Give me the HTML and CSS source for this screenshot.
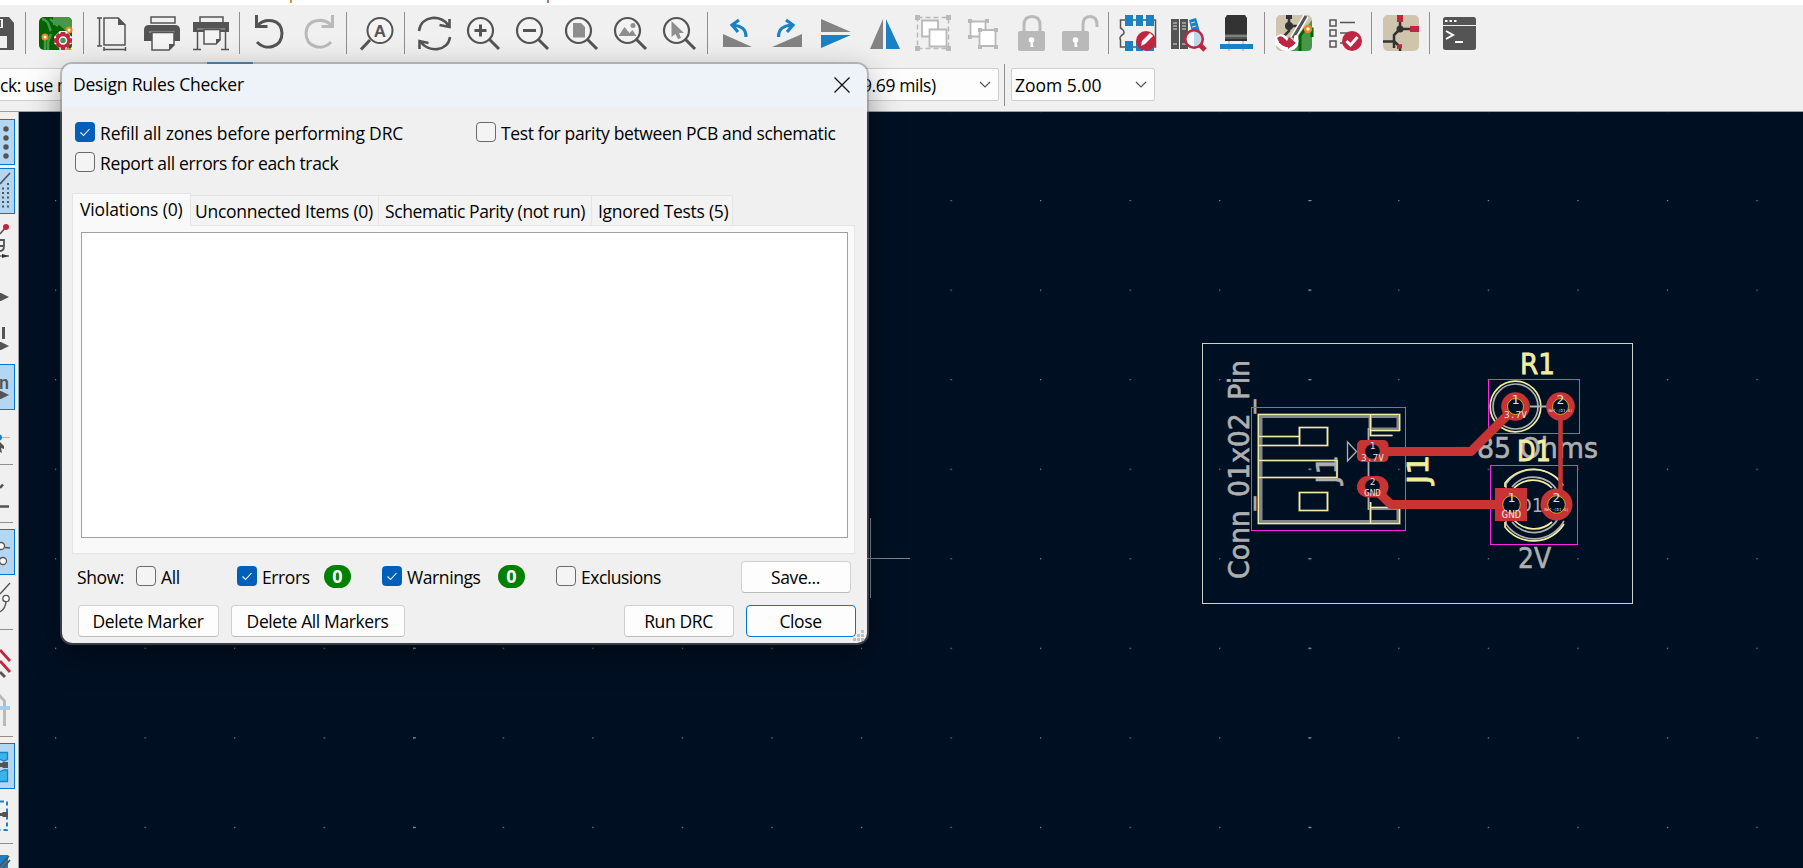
FILE: index.html
```html
<!DOCTYPE html>
<html lang="en">
<head>
<meta charset="utf-8">
<title>PCB Editor</title>
<link rel="stylesheet" href="styles.css">
</head>
<body>
<div class="app">
  <div class="menu-strip"><i class="tick tick-a"></i><i class="tick tick-b"></i></div>
  <header class="toolbars">
    <div class="main-toolbar">
      <svg class="tool" viewBox="0 10 49 48"><path d="M10 17h27l5 6v27H10z" fill="#545454"/><path d="M20 19h11v9H20z" fill="#f0f0f0"/><path d="M27 20h2v7h-2z" fill="#545454"/><path d="M16 36h19v12H16z" fill="#f0f0f0"/></svg>
      <i class="sep"></i>
      <svg class="tool" viewBox="0 10 49 48"><rect x="9" y="17" width="33" height="33" rx="5" fill="#006400"/><path d="M23 17h14q5 0 5 5v9h-6l-7-6h-6z" fill="#489648"/><path d="M12 19c8 2 6 7 9 12M15 40v10M21 34l-3 8v8M20 19l8 7" fill="none" stroke="#489648" stroke-width="2.5"/><circle cx="15" cy="37" r="2.5" fill="#fff" stroke="#e58a1a" stroke-width="2"/><circle cx="39" cy="30" r="2.5" fill="#fff" stroke="#e58a1a" stroke-width="2"/><path d="M38 47l4 3h-6z" fill="#f29100"/><g stroke="#fff" stroke-width="7"><path d="M33 31v19M24 40h18M27 34l12 12M39 34L27 46"/></g><g stroke="#bf2641" stroke-width="4.5"><path d="M33 32v18M24 40.500h18M27 34.500l12 12M39 34.500l-12 12"/></g><circle cx="33" cy="40.500" r="5" fill="#489648" stroke="#bf2641" stroke-width="5"/><circle cx="33" cy="40.500" r="3.500" fill="#489648" stroke="#fff" stroke-width="1.500"/></svg>
      <i class="sep"></i>
      <svg class="tool" viewBox="0 10 49 48"><g fill="none" stroke="#545454" stroke-width="1.500"><path d="M11.500 18v28M9 18h5M9 46h5M16 49.500h22M16 47v4M37.500 47v4"/><path d="M16 18h14l7 7v20H16z"/></g><path d="M30 17l8 8h-8z" fill="#545454"/></svg>
      <svg class="tool" viewBox="0 10 49 48"><path d="M14 17h24v6H14z" fill="#f0f0f0" stroke="#545454" stroke-width="1.500"/><path d="M12 25h26q5 0 5 5v11h-5v-9H12v9H7V30q0-5 5-5z" fill="#545454"/><path d="M12 32h26v9H12z" fill="#545454"/><path d="M12 32h26" stroke="#bbb"/><path d="M15 32.500h22V45l-5 5H15z" fill="#f4f4f4" stroke="#545454" stroke-width="1.500"/><path d="M32 44h6l-6 6z" fill="#545454"/></svg>
      <svg class="tool" viewBox="0 10 49 48"><path d="M14 17h23v6H14z" fill="#f0f0f0" stroke="#545454" stroke-width="1.500"/><path d="M7 22h36v10H7z" fill="#545454"/><path d="M11 29h28" stroke="#aaa"/><path d="M11.500 32v17M7 49.500h8M39.500 32v17M35 49.500h8" stroke="#545454" stroke-width="1.500"/><path d="M18 29.500h16V40l-4 4H18z" fill="#f4f4f4" stroke="#545454" stroke-width="1.500"/><path d="M30 39h5l-5 5z" fill="#545454"/></svg>
      <i class="sep"></i>
      <svg class="tool" viewBox="0 10 49 48"><g fill="none" stroke="#545454" stroke-width="3"><path d="M14 25C21 18 37 18 38 33c0 15-17 18-25 9"/><path d="M12.500 15v11.500h11"/></g></svg>
      <svg class="tool" viewBox="0 10 49 48"><g fill="none" stroke="#b9b9b9" stroke-width="3"><path d="M38 25C31 18 14 18 13 33c0 15 17 18 25 9"/><path d="M39.500 15v11.500h-11"/></g></svg>
      <i class="sep"></i>
      <svg class="tool" viewBox="0 10 49 48"><circle cx="29" cy="30.500" r="12.500" fill="#f3f3f3" stroke="#545454" stroke-width="2"/><path d="M19 40L10 49.500" stroke="#545454" stroke-width="3"/><text x="29" y="37" text-anchor="middle" class="find-letter">A</text></svg>
      <i class="sep"></i>
      <svg class="tool" viewBox="0 10 49 48"><g fill="none" stroke="#545454" stroke-width="2.600"><path d="M10 31c2-16 23-17 30-5M40.500 19v8l-10-2M41 37c-2 15-22 16-30 4M10.500 49v-8l9 2"/></g></svg>
      <svg class="tool" viewBox="0 10 49 48"><circle cx="22.500" cy="30.500" r="12.500" class="lens"/><path d="M31 39l10 10" class="handle"/><path d="M16.500 30.500h12M22.500 24.500v12" stroke="#545454" stroke-width="3"/></svg>
      <svg class="tool" viewBox="0 10 49 48"><circle cx="22.500" cy="30.500" r="12.500" class="lens"/><path d="M31 39l10 10" class="handle"/><path d="M16 30.500h13" stroke="#545454" stroke-width="3"/></svg>
      <svg class="tool" viewBox="0 10 49 48"><circle cx="22.500" cy="30.500" r="12.500" class="lens"/><path d="M31 39l10 10" class="handle"/><path d="M17 23h8l4 4v10.500H17z" fill="#8e8e8e"/></svg>
      <svg class="tool" viewBox="0 10 49 48"><circle cx="22.500" cy="30.500" r="12.500" class="lens"/><path d="M31 39l10 10" class="handle"/><path d="M13.500 36l6-9 5 6 3-3 4 6z" fill="#8e8e8e"/><circle cx="28" cy="25.500" r="2.500" fill="#8e8e8e"/></svg>
      <svg class="tool" viewBox="0 10 49 48"><circle cx="22.500" cy="30.500" r="12.500" class="lens"/><path d="M31 39l10 10" class="handle"/><path d="M17.500 21v16l4-3 2.500 5 3-1-2-5h5z" fill="#8e8e8e"/></svg>
      <i class="sep"></i>
      <svg class="tool" viewBox="0 10 49 48"><path d="M11 34v13h29z" fill="#838383"/><path d="M34 37c0-8-4-11-14-12M27 20l-7 5 6 7" fill="none" stroke="#1a81c4" stroke-width="3.200"/></svg>
      <svg class="tool" viewBox="0 10 49 48"><path d="M41 34v13H11z" fill="#838383"/><path d="M17.500 37c0-8 4-11 14-12M25 20l7 5-6 7" fill="none" stroke="#1a81c4" stroke-width="3.200"/></svg>
      <svg class="tool" viewBox="0 10 49 48"><path d="M11 19v13h30z" fill="#838383"/><path d="M11 35h30L11 48z" fill="#1a81c4"/></svg>
      <svg class="tool" viewBox="0 10 49 48"><path d="M24 19v30H11z" fill="#838383"/><path d="M27 19v30h14z" fill="#1a81c4"/></svg>
      <svg class="tool" viewBox="0 10 49 48"><path d="M9.500 17.500h31v31h-31z" fill="none" stroke="#b9b9b9" stroke-width="1.500" stroke-dasharray="5 3"/><path d="M7 15h5v5H7zM38 15h5v5h-5zM7 46h5v5H7zM38 46h5v5h-5z" fill="#b9b9b9"/><path d="M14 20.500h16v16H14z" fill="#fff" stroke="#b9b9b9" stroke-width="1.800"/><path d="M21.500 29.500h17v17h-17z" fill="#fff" stroke="#b9b9b9" stroke-width="1.800"/></svg>
      <svg class="tool" viewBox="0 10 49 48"><path d="M13.500 21.500h15v15h-15z" fill="#fff" stroke="#b9b9b9" stroke-width="1.800"/><path d="M22.500 30h16v16h-16z" fill="#fff" stroke="#b9b9b9" stroke-width="1.800"/><path d="M11 19h4v4h-4zM28 19h4v4h-4zM11 35h4v4h-4zM21 28h4v4h-4zM37 28h4v4h-4zM21 45h4v4h-4zM37 45h4v4h-4z" fill="#b9b9b9"/></svg>
      <svg class="tool" viewBox="0 10 49 48"><path d="M18 32v-7q0-8.500 8-8.500t8 8.500v7" fill="none" stroke="#b9b9b9" stroke-width="3"/><rect x="12" y="31" width="27" height="20" rx="2" fill="#b9b9b9"/><circle cx="25.500" cy="40" r="2.800" fill="#fff"/><path d="M24.500 41h2l1 6h-3z" fill="#fff"/></svg>
      <svg class="tool" viewBox="0 10 49 48"><path d="M28 32v-7q0-8.500 7-8.500t7 8.500v2" fill="none" stroke="#b9b9b9" stroke-width="3"/><rect x="7" y="31" width="27" height="20" rx="2" fill="#b9b9b9"/><circle cx="20.500" cy="40" r="2.800" fill="#fff"/><path d="M19.500 41h2l1 6h-3z" fill="#fff"/></svg>
      <i class="sep"></i>
      <svg class="tool" viewBox="0 10 49 48"><path d="M13 20H7.500v8q5 3 3 6-5 3-3 6v7H42.500V20z" fill="none" stroke="#545454" stroke-width="1.500"/><path d="M12 15h8v11h-8zM23 15h7v11h-7zM33 15h8v11h-8zM12 41h8v10h-8zM23 41h7v10h-7zM33 41h8v10h-8z" fill="#1a81c4"/><circle cx="33" cy="41" r="10" fill="#bf2641"/><path d="M28 46l1-5 8-8 3 3-8 8z" fill="#fff"/></svg>
      <svg class="tool" viewBox="0 10 49 48"><path d="M9 19h8v30H9zM18 19h8v30h-8z" fill="#545454"/><path d="M11 23h4M11 26h4M11 29h4M11 44h4M20 23h4M20 26h4M20 29h4M20 44h4" stroke="#ddd"/><path d="M27 20l7-2 7 24-8 2z" fill="#1a81c4"/><path d="M29 23l4-1M30 27l4-1" stroke="#ddd"/><path d="M36 43l7 7" stroke="#bf2641" stroke-width="5"/><circle cx="32" cy="39" r="8.800" fill="#bed8ea" stroke="#bf2641" stroke-width="2.500"/><path d="M32 32v14a7 7 0 010-14z" fill="#fff"/></svg>
      <svg class="tool" viewBox="0 10 49 48"><path d="M18 41v10M32 41v10" stroke="#b9b9b9" stroke-width="1.500"/><path d="M16 15h18l2 3v16H14V18z" fill="#333"/><path d="M14 34h22v7H14z" fill="#545454"/><path d="M14 36h22" stroke="#aaa"/><path d="M14 39h22v2H14z" fill="#333"/><path d="M9 44h33v5H9z" fill="#1a81c4"/></svg>
      <i class="sep"></i>
      <svg class="tool" viewBox="0 10 49 48"><rect x="7" y="15" width="36" height="36" rx="5" fill="#cfc4ac"/><path d="M43 20v26q0 5-5 5H20z" fill="#489648"/><path d="M31 51V36l5-7h7v8" fill="none" stroke="#006400" stroke-width="3"/><circle cx="39" cy="29" r="3" fill="#fff" stroke="#e58a1a" stroke-width="2.500"/><path d="M20 15v16l-6 6v4M20 26h8" fill="none" stroke="#333" stroke-width="2.500"/><path d="M17 15h6v4h-6z" fill="#333"/><circle cx="20" cy="26" r="4" fill="#333"/><path d="M37 16L24 38" stroke="#fff" stroke-width="6"/><path d="M37 16L24 38" stroke="#545454" stroke-width="3"/><path d="M8 38q5-4 10 2l-3 2h12v-5q2 8-3 11-9 4-16-5z" fill="#bf2641" stroke="#fff" stroke-width="4" stroke-linejoin="round"/><path d="M8 38q4-4 8 1l2 2 2-4 7 6-8 6v-3q-8 0-11-8z" fill="#bf2641"/></svg>
      <svg class="tool" viewBox="0 10 49 48"><g fill="none" stroke="#545454" stroke-width="1.500"><path d="M12 20h6v6h-6zM12 30h6v6h-6zM12 41h6v6h-6zM22 22.500h15M22 33h10M22 43h5"/></g><circle cx="34" cy="41" r="10" fill="#bf2641"/><path d="M28.500 41l4 4 7-8" fill="none" stroke="#fff" stroke-width="3"/></svg>
      <i class="sep"></i>
      <svg class="tool" viewBox="0 10 49 48"><rect x="7" y="15" width="36" height="36" rx="5" fill="#cfc4ac"/><path d="M24 20v9h11M24 29l-6 6v13M7 41.500h11M18 41l6 6v4" fill="none" stroke="#333" stroke-width="2.500"/><circle cx="24" cy="29" r="3.500" fill="#333"/><path d="M21 15h6v7h-6zM34 26h9v6h-9z" fill="#bf2641"/><path d="M21 45l5-1v4l-5 1z" fill="#bf2641"/></svg>
      <i class="sep"></i>
      <svg class="tool" viewBox="0 10 49 48"><rect x="9" y="17" width="33" height="33" rx="2.500" fill="#545454"/><path d="M9 25.500h33" stroke="#f0f0f0" stroke-width="1.200"/><path d="M11 20h2.500v2H11zM15.500 20H18v2h-2.500zM20 20h2.500v2H20z" fill="#fff"/><path d="M12 31l7 4-7 4M21 42h8" fill="none" stroke="#fff" stroke-width="2"/></svg>
    </div>
    <div class="options-toolbar">
      <div class="combo combo-track"><span class="t-track">ck: use n</span></div>
      <i class="hot-edge"></i>
      <div class="combo combo-via"><span class="t-via">9.69 mils)</span><svg class="chev" viewBox="0 0 12 8"><path d="M1 1l5 5 5-5"/></svg></div>
      <i class="vbar"></i>
      <div class="combo combo-zoom"><span class="t-zoom">Zoom 5.00</span><svg class="chev" viewBox="0 0 12 8"><path d="M1 1l5 5 5-5"/></svg></div>
    </div>
  </header>
  <div class="workspace">
    <aside class="side-toolbar">
      <svg class="side on" viewBox="0 0 18 49"><g fill="#545454"><circle cx="6" cy="12" r="2.700"/><circle cx="6" cy="21" r="2.700"/><circle cx="6" cy="30" r="2.700"/><circle cx="6" cy="39" r="2.700"/></g></svg>
      <svg class="side on" viewBox="0 0 18 49"><path d="M0 18L10 7" stroke="#545454" stroke-width="1.600"/><path d="M8 17v25M3 21.500v21" stroke="#545454" stroke-width="2" stroke-dasharray="2 2.500"/></svg>
      <svg class="side" viewBox="0 0 18 49"><path d="M0 19l6-7" stroke="#545454" stroke-width="1.500"/><circle cx="6" cy="12" r="3" fill="#bf2641"/><path d="M0 25h4v6q0 5-4 5M4 31H0" fill="none" stroke="#545454" stroke-width="1.800"/><path d="M0 41h9" stroke="#333"/><path d="M2 39l7 2-7 2z" fill="#333"/></svg>
      <svg class="side" viewBox="0 0 18 49"><path d="M0 29h1l8 4-8 4H0z" fill="#545454"/></svg>
      <svg class="side" viewBox="0 0 18 49"><path d="M2 14h3v12H2zM0 29h1l8 4-8 4H0z" fill="#545454"/></svg>
      <svg class="side on" viewBox="0 0 18 49"><text x="-1" y="27" class="unit" textLength="10" lengthAdjust="spacingAndGlyphs">n</text><path d="M0 29h1l8 4-8 4H0z" fill="#545454"/></svg>
      <svg class="side" viewBox="0 0 18 49"><path d="M0 26.500h10" stroke="#b9b9b9" stroke-width="1.200"/><circle cx="-1" cy="26.500" r="3" fill="#1a81c4"/><path d="M0 31l4 4v3l-3-1 1 5-2-1z" fill="#545454"/></svg>
      <i class="hsep"></i>
      <svg class="side" viewBox="0 0 18 49"><path d="M0 19l3-3.500M0 37.500h9" stroke="#545454" stroke-width="2.600"/></svg>
      <i class="hsep"></i>
      <svg class="side on" viewBox="0 0 18 49"><path d="M0 20l10 1M0 31l3 3" stroke="#545454" stroke-width="1.600"/><circle cx="1" cy="19" r="3.500" fill="#fff" stroke="#545454" stroke-width="1.300"/><circle cx="3" cy="34" r="3.500" fill="#fff" stroke="#545454" stroke-width="1.300"/></svg>
      <svg class="side" viewBox="0 0 18 49"><path d="M0 18L10 7M6 25q0 7-6 11" fill="none" stroke="#545454" stroke-width="1.400"/><circle cx="6" cy="22.500" r="3.200" fill="#fff" stroke="#545454" stroke-width="1.300"/></svg>
      <i class="hsep"></i>
      <svg class="side" viewBox="0 0 18 49"><path d="M0 16l10 11M0 27l10 11" stroke="#bf2641" stroke-width="2.800"/><path d="M0 38l5 5" stroke="#545454" stroke-width="2.800"/></svg>
      <svg class="side" viewBox="0 0 18 49"><path d="M-1 12l5.500 6v25" fill="none" stroke="#b9b9b9" stroke-width="3"/><path d="M0 23h10v4H0z" fill="#a3cde8"/></svg>
      <i class="hsep"></i>
      <svg class="side on" viewBox="0 0 18 49"><path d="M-1 11.500h8.500v7L4 20l-5-2zM-1 31l5-2h3.500v11.500H-1z" fill="#39b4ea" stroke="#1a81c4" stroke-width="1.300"/><path d="M0 22h2l1-1h5v6H3l-1-1H0z" fill="#545454"/></svg>
      <svg class="side" viewBox="0 0 18 49"><path d="M0 11.500h7V40H0" fill="none" stroke="#1a81c4" stroke-width="2" stroke-dasharray="4 3"/><path d="M0 23h2l1-1h5v5H3l-1-1H0z" fill="#545454"/></svg>
      <i class="hsep"></i>
      <svg class="side last" viewBox="0 0 18 20"><path d="M0 7h8v13H0z" fill="#1a81c4"/><path d="M-2 20L9 8M3 20l7-8" stroke="#545454" stroke-width="1.800"/></svg>
    </aside>
    <main class="canvas">
      <svg class="board" viewBox="19 112 1784 756">
        <defs>
          <pattern id="grid" x="55" y="200" width="89.550" height="89.550" patternUnits="userSpaceOnUse"><rect width="1.200" height="1.200" fill="#8a9096"/></pattern>
          <pattern id="major" x="413" y="200" width="895.500" height="89.550" patternUnits="userSpaceOnUse"><rect width="3" height="1.100" fill="#8a9096"/></pattern>
        </defs>
        <rect x="19" y="112" width="1784" height="756" fill="url(#grid)"/>
        <rect x="19" y="112" width="1784" height="756" fill="url(#major)"/>
        <path d="M870.500 518v80M830 558.500h80" stroke="#7f868c"/>
        <rect x="1202.500" y="343.500" width="430" height="260" fill="none" stroke="#d0d2cd"/>

        <g fill="none" stroke="#868890" stroke-width="3"><path d="M1398 416.500h-137v105h137v-13M1398 416v13h-28v-13M1370 508.500h28"/></g>
        <g fill="none" stroke="#afafaf" stroke-width="1.800"><path d="M1368.500 428v82"/><path d="M1347.500 442v19l9-9.500z" stroke-width="1.300"/></g>
        <text class="fab" transform="translate(1337 484) rotate(-90)" textLength="29" lengthAdjust="spacingAndGlyphs">J1</text>
        <text class="fab" transform="translate(1249 579) rotate(-90)" textLength="219" lengthAdjust="spacingAndGlyphs">Conn_01x02_Pin</text>
        <g fill="none" stroke="#a09e78" stroke-width="2.200"><path id="j1silk" d="M1399.500 431v-16.500h-141v109h141V508M1370.500 414v21.500h22M1370 430.500h30M1370.500 502v21M1370 507.500h29M1259 436.500h40M1259 445.500h41M1259 460.500h78v17h-78M1299.500 427.500h28v18h-28zM1299.500 492.500h28v18h-28z"/></g>
        <use href="#j1silk" fill="none" stroke="#f2eda1" stroke-width="1.200"/>
        <rect x="1251.500" y="407.500" width="154" height="123" class="court"/>

        <circle cx="1515.500" cy="406.500" r="22.500" fill="none" stroke="#afafaf" stroke-width="1.700"/>
        <circle cx="1515.500" cy="406.500" r="25.300" fill="none" stroke="#f2eda1" stroke-width="1.700"/>
        <path d="M1530 406.500h20" stroke="#afafaf" stroke-width="2"/>
        <rect x="1488.500" y="379.500" width="91" height="54" class="court"/>
        <text class="silk" x="1520" y="374" textLength="35" lengthAdjust="spacingAndGlyphs">R1</text>
        <text class="fab" x="1477" y="458" textLength="121" lengthAdjust="spacingAndGlyphs">85 Ohms</text>
        <text class="silk" x="1517" y="461" textLength="34" lengthAdjust="spacingAndGlyphs">D1</text>
        <text class="silk" transform="translate(1428 484) rotate(-90)" textLength="29" lengthAdjust="spacingAndGlyphs">J1</text>

        <g fill="none" stroke="#afafaf" stroke-width="1.700"><path d="M1506 484a34 34 0 0157 2M1506 524a34 34 0 0058-3M1506 484v40M1512 487a28 28 0 0146 5M1512 522a28 28 0 0047-5"/></g>
        <g fill="none" stroke="#f2eda1" stroke-width="1.700"><path d="M1505 487v-4a36 36 0 0158 2M1505 522v5a36 36 0 0059-3M1514 488a27 27 0 0138 0M1514 520a27 27 0 0038 2"/></g>
        <text class="fab small" x="1518" y="512" textLength="25" lengthAdjust="spacingAndGlyphs">D1</text>
        <text class="fab" x="1518" y="568" textLength="33" lengthAdjust="spacingAndGlyphs">2V</text>
        <rect x="1490.500" y="465.500" width="87" height="79" class="court"/>

        <g fill="none" stroke="#c83434" stroke-linejoin="round"><path d="M1380 451.500h91l44-44M1372.500 486.500l18.500 18h120" stroke-width="9"/><path d="M1560.500 406v98" stroke-width="4.500"/></g>
        <g fill="#c83434"><rect x="1357" y="440" width="31.500" height="22" rx="5"/><rect x="1357" y="476" width="31.500" height="21.500" rx="10.700"/><circle cx="1515.500" cy="406.500" r="14.300"/><circle cx="1560.500" cy="406.500" r="14.300"/><path d="M1495 488h32v33h-32z"/><circle cx="1556.500" cy="504.500" r="16"/></g>
        <g fill="#001023"><circle cx="1372.500" cy="451.500" r="7.300"/><circle cx="1372.500" cy="486.500" r="7.300"/><g stroke="#d9a520"><circle cx="1515.500" cy="406.500" r="8"/><circle cx="1560.500" cy="406.500" r="8"/><circle cx="1511.500" cy="504.500" r="8.800"/><circle cx="1556.500" cy="504.500" r="8.800"/></g></g>
        <g class="padtext">
          <text x="1372.500" y="449">1</text><text x="1372.500" y="461">3.7V</text>
          <text x="1372.500" y="485">2</text><text x="1372.500" y="496">GND</text>
          <g class="num"><text x="1515.500" y="404">1</text><text x="1560.500" y="404">2</text><text x="1511.500" y="502">1</text><text x="1556.500" y="502">2</text></g>
          <text x="1515.500" y="418">3.7V</text><text x="1511.500" y="518" class="gnd">GND</text>
          <text x="1560.500" y="412" class="tiny">Net-(D1-A)</text><text x="1556.500" y="511" class="tiny">Net-(D1-A)</text>
        </g>
      </svg>
    </main>
  </div>
</div>

<section class="dialog">
  <div class="titlebar"><span class="t-title">Design Rules Checker</span><svg class="close-x" viewBox="0 0 16 16"><path d="M.5.500l15 15M15.500.500l-15 15"/></svg></div>
  <div class="options">
    <label><i class="cb checked"><svg viewBox="0 0 20 20"><path d="M5.500 10.500l3 3 6-6.500"/></svg></i><span class="t-refill">Refill all zones before performing DRC</span></label>
    <label><i class="cb"></i><span class="t-test">Test for parity between PCB and schematic</span></label>
    <label><i class="cb"></i><span class="t-report">Report all errors for each track</span></label>
  </div>
  <div class="tabs">
    <div class="tab tab-1"><span class="t-viol">Violations (0)</span></div>
    <div class="tab tab-2"><span class="t-unc">Unconnected Items (0)</span></div>
    <div class="tab tab-3"><span class="t-sch">Schematic Parity (not run)</span></div>
    <div class="tab tab-4"><span class="t-ign">Ignored Tests (5)</span></div>
  </div>
  <div class="panel"><div class="list"></div></div>
  <div class="show-row">
    <span class="t-show">Show:</span>
    <label><i class="cb"></i><span class="t-all">All</span></label>
    <label><i class="cb checked"><svg viewBox="0 0 20 20"><path d="M5.500 10.500l3 3 6-6.500"/></svg></i><span class="t-err">Errors</span></label>
    <b class="badge">0</b>
    <label><i class="cb checked"><svg viewBox="0 0 20 20"><path d="M5.500 10.500l3 3 6-6.500"/></svg></i><span class="t-warn">Warnings</span></label>
    <b class="badge">0</b>
    <label><i class="cb"></i><span class="t-excl">Exclusions</span></label>
    <div class="btn">Save...</div>
  </div>
  <div class="button-row">
    <div class="btn b-del">Delete Marker</div>
    <div class="btn b-all">Delete All Markers</div>
    <div class="btn b-run">Run DRC</div>
    <div class="btn b-close">Close</div>
  </div>
  <svg class="grip" viewBox="0 0 11 11"><path d="M8 0h3v3H8zM4 4h3v3H4zM8 4h3v3H8zM0 8h3v3H0zM4 8h3v3H4zM8 8h3v3H8z" fill="#bfbfbf"/></svg>
</section>
</body>
</html>
```
FILE: styles.css
```css
* { box-sizing: border-box; }
html, body { margin: 0; height: 100%; overflow: hidden; }
body {
  font-family: "Open Sans", "Noto Sans", sans-serif;
  font-size: 17.5px;
  letter-spacing: -0.4px;
  color: #000;
  background: #f0f0f0;
}
svg { display: block; }
span, .btn { white-space: nowrap; }
.app { display: flex; flex-direction: column; width: 1803px; height: 868px; overflow: hidden; }

.menu-strip { height: 5px; flex: none; background: #fff; display: flex; }
.tick { width: 2px; height: 3px; background: #c99a4a; }
.tick-a { margin-left: 290px; }
.tick-b { margin-left: 255px; background: #a8728c; }

.toolbars { flex: none; height: 107px; background: #f0f0f0; border-bottom: 1px solid #a0a0a0; display: flex; flex-direction: column; }
.main-toolbar { display: flex; height: 57px; padding-top: 5px; margin-left: -28px; }
.tool { width: 49px; height: 48px; flex: none; }
.sep { width: 9px; flex: none; height: 42px; margin-top: 2px; background: linear-gradient(#8f8f8f, #8f8f8f) 4px 0 / 1px 100% no-repeat; }
.lens { fill: #f3f3f3; stroke: #545454; stroke-width: 2.2; }
.handle { stroke: #545454; stroke-width: 3; }
.find-letter { font: bold 17px "Liberation Sans", sans-serif; fill: #545454; letter-spacing: 0; }

.options-toolbar { display: flex; height: 49px; padding-top: 6px; }
.combo { height: 33px; background: #fdfdfd; border: 1px solid #cfcfcf; border-radius: 2px; display: flex; align-items: center; justify-content: space-between; flex: none; }
.combo-track { width: 190px; border-left: 0; border-radius: 0; }
.hot-edge { width: 46px; height: 2px; margin: -6px 0 0 17px; background: #2d7fc0; flex: none; }
.combo-via { width: 159px; margin-left: 587px; padding: 0 7px 0 21px; }
.vbar { width: 1px; height: 42px; margin: -4px 6px 0 5px; background: #8f8f8f; }
.combo-zoom { width: 144px; padding: 0 7px 0 3px; }
.t-zoom { letter-spacing: 0; }
.chev { width: 12px; height: 8px; fill: none; stroke: #555; stroke-width: 1.2; }

.workspace { flex: 1; display: flex; min-height: 0; }
.side-toolbar { width: 19px; flex: none; padding-top: 5px; background: #f0f0f0; border-right: 1px solid #a0a0a0; overflow: hidden; }
.side { width: 18px; height: 49px; }
.side.last { height: 20px; }
.side.on { background: linear-gradient(#b3d6f2, #b3d6f2) 0 3px / 14px 44px no-repeat, linear-gradient(#0078d7, #0078d7) 0 2px / 15px 46px no-repeat; }
.hsep { display: block; width: 13px; height: 9px; background: linear-gradient(#8f8f8f, #8f8f8f) 0 4px / 100% 1px no-repeat; }
.unit { font: bold 19px "Liberation Sans", sans-serif; fill: #545454; letter-spacing: 0; }

.canvas { flex: 1; background: #001023; }
.board { width: 1784px; height: 756px; }
.court { fill: none; stroke: #ff26e2; stroke-width: 1; }
.board text { font-family: "DejaVu Sans", sans-serif; font-size: 27.5px; letter-spacing: 0; }
.board .fab { fill: #afafaf; stroke: #afafaf; stroke-width: .6; }
.board .silk { fill: #f2eda1; stroke: #f2eda1; stroke-width: .8; }
.board .small { font-size: 20px; stroke: none; }
.board .padtext text { font-family: "DejaVu Sans Mono", monospace; font-size: 9.5px; fill: #e8dcdc; text-anchor: middle; }
.board .padtext .num text { font-size: 13px; }
.board .padtext .gnd { font-size: 11px; }
.board .padtext .tiny { font-size: 4px; }

.dialog {
  position: absolute; left: 62px; top: 64px; width: 805px; height: 579px;
  display: flex; flex-direction: column;
  background: #f0f0f0; border-radius: 10px;
  box-shadow: 0 0 0 2px rgba(125, 125, 125, .45), 0 12px 34px rgba(0, 0, 0, .42);
}
.titlebar { height: 43px; flex: none; display: flex; align-items: center; justify-content: space-between; padding: 0 17px 4px 11px; background: #eef3fa; border-radius: 10px 10px 0 0; }
.t-title { letter-spacing: -.2px; }
.close-x { width: 16px; height: 16px; margin-top: 3px; fill: none; stroke: #111; stroke-width: 1.3; }
.options { height: 86px; flex: none; display: grid; grid-template-columns: 401px 1fr; grid-auto-rows: 30px; padding: 15px 0 0 13px; }
label { display: flex; height: 20px; align-items: center; }
label span { margin-left: 5px; padding-top: 2px; line-height: 24px; }
.t-refill { letter-spacing: -.16px; }
.t-report, .t-test { letter-spacing: -.35px; }
.cb { width: 20px; height: 20px; flex: none; border: 1px solid #6a6a6a; border-radius: 4px; background: #f4f4f4; }
.cb.checked { background: #005fb8; border: 0; }
.cb svg { fill: none; stroke: #fff; stroke-width: 1.1; }

.tabs { height: 32px; flex: none; display: flex; align-items: flex-end; padding-left: 10px; }
.tab { height: 30px; border: 1px solid #e5e5e5; border-left: 0; border-bottom: 0; background: #f3f3f3; display: flex; align-items: center; }
.tab-1 { width: 119px; height: 33px; margin-bottom: -1px; border-left: 1px solid #e5e5e5; background: #f9f9f9; padding-left: 7px; position: relative; }
.tab-2 { width: 188px; padding-left: 4px; }
.tab-3 { width: 213px; padding-left: 6px; }
.tab-4 { width: 141px; padding-left: 6px; }
.tab span { padding-top: 1px; }
.tab-1 span { padding: 0 0 2px; }
.t-viol { letter-spacing: -.15px; }
.t-unc, .t-ign { letter-spacing: -.28px; }
.panel { height: 329px; flex: none; margin: 0 12px 0 10px; padding: 6px 6px 15px 8px; border: 1px solid #e5e5e5; background: #f9f9f9; }
.list { height: 100%; background: #fff; border: 1px solid #a0a0a0; }

.show-row { height: 39px; flex: none; padding: 7px 0 0 15px; display: grid; grid-template-columns: 59px 101px 87px 58px 116px 58px 185px 110px; align-items: center; }
.show-row label { margin-top: -2px; }
.t-excl { letter-spacing: -.5px; }
.badge { width: 27px; height: 23px; margin-top: -1px; border-radius: 12px; background: #008000; color: #fff; font: bold 18px/23px "Open Sans", sans-serif; text-align: center; letter-spacing: 0; }
.btn { height: 32px; border: 1px solid #d0d0d0; border-bottom-color: #bcbcbc; border-radius: 4px; background: #fdfdfd; display: flex; align-items: center; justify-content: center; padding: 0 1px 1px 0; }
.button-row { display: flex; gap: 12px; margin-top: 12px; padding: 0 11px 0 16px; }
.b-del { width: 141px; }
.b-all { width: 174px; }
.b-run { width: 110px; margin-left: auto; }
.b-close { width: 110px; border-color: #0078d4; }
.grip { position: absolute; right: 3px; bottom: 2px; width: 11px; height: 11px; }
```
